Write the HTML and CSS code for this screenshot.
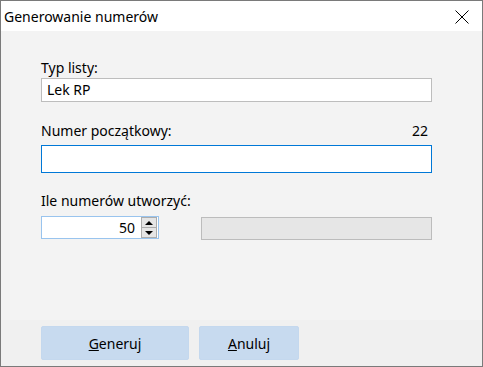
FILE: index.html
```html
<!DOCTYPE html>
<html lang="pl">
<head>
    <meta charset="UTF-8">
    <title>Generowanie numerów</title>
    <link rel="stylesheet" href="styles.css">
</head>
<body>
    <div class="window">
        <!-- Title bar -->
        <div class="titlebar">
            <span class="title">Generowanie numerów</span>
            <span class="close">
                <svg width="14" height="14" viewBox="0 0 14 14"><path d="M0.5 0.5 L13.5 13.5 M13.5 0.5 L0.5 13.5" stroke="#000" stroke-width="1" fill="none"/></svg>
            </span>
        </div>

        <!-- Form fields -->
        <div class="content">
            <div class="label label-first">Typ listy:</div>
            <div class="textbox">Lek RP</div>

            <div class="label label-row">
                <span>Numer początkowy:</span>
                <span>22</span>
            </div>
            <div class="textbox textbox-focus"></div>

            <div class="label label-third">Ile numerów utworzyć:</div>
            <div class="spin-row">
                <div class="spinner">
                    <span class="spin-value">50</span>
                    <span class="spin-buttons">
                        <span class="spin-btn"><span class="arrow-up"></span></span>
                        <span class="spin-btn"><span class="arrow-down"></span></span>
                    </span>
                </div>
                <div class="progress"></div>
            </div>
        </div>

        <!-- Buttons -->
        <div class="footer">
            <button class="btn btn-generate"><u>G</u>eneruj</button>
            <button class="btn btn-cancel"><u>A</u>nuluj</button>
        </div>
    </div>
</body>
</html>
```

FILE: styles.css
```css
body {
    margin: 0;
    font-family: "Noto Sans", "Open Sans", sans-serif;
    font-size: 14px;
    color: #000;
}

/* Dialog window */
.window {
    width: 483px;
    height: 367px;
    box-sizing: border-box;
    border: 1px solid #7a7a7a;
    display: flex;
    flex-direction: column;
    background-color: #f3f3f3;
}

.titlebar {
    height: 30px;
    background-color: #fff;
    display: flex;
    align-items: center;
    justify-content: space-between;
    padding-left: 3px;
    padding-right: 13px;
    font-size: 14px;
}

.close {
    display: flex;
    margin-top: 1px;
}

.content {
    flex: 1;
    padding: 0 50px 0 40px;
}

.label {
    line-height: 20px;
}

.label-first {
    margin-top: 27px;
}

.label-row {
    display: flex;
    justify-content: space-between;
    padding-right: 4px;
    margin-top: 19px;
    margin-bottom: 4px;
}

.label-third {
    margin-top: 18px;
    margin-bottom: 5px;
}

.textbox {
    height: 24px;
    box-sizing: border-box;
    border: 1px solid #bdbdbd;
    background-color: #fff;
    padding-left: 5px;
    line-height: 22px;
}

.textbox-focus {
    height: 28px;
    border-color: #0078d7;
}

.spin-row {
    display: flex;
    gap: 42px;
}

.spinner {
    width: 118px;
    height: 23px;
    box-sizing: border-box;
    border: 1px solid #99c4ee;
    background-color: #fff;
    display: flex;
    justify-content: flex-end;
}

.spin-value {
    line-height: 21px;
    padding-right: 6px;
}

.spin-buttons {
    width: 16px;
    display: flex;
    flex-direction: column;
    margin-right: 1px;
}

.spin-btn {
    flex: 1;
    background-color: #e5e5e5;
    border: 1px solid #acacac;
    display: flex;
    align-items: center;
    justify-content: center;
}

.spin-btn + .spin-btn {
    border-top: none;
}

.arrow-up {
    border-left: 4px solid transparent;
    border-right: 4px solid transparent;
    border-bottom: 4px solid #000;
}

.arrow-down {
    border-left: 4px solid transparent;
    border-right: 4px solid transparent;
    border-top: 4px solid #000;
}

.progress {
    flex: 1;
    height: 23px;
    margin-top: 1px;
    box-sizing: border-box;
    border: 1px solid #bcbcbc;
    background-color: #e6e6e6;
}

.footer {
    height: 46px;
    background-color: #f0f0f0;
    padding: 6px 0 0 40px;
    box-sizing: border-box;
    display: flex;
    gap: 10px;
    align-items: flex-start;
}

.btn {
    height: 34px;
    border: 1px solid #c4d8ee;
    border-radius: 2px;
    background-color: #c7daef;
    font-family: inherit;
    font-size: 14px;
    color: #000;
    padding: 0;
}

.btn-generate {
    width: 148px;
}

.btn-cancel {
    width: 100px;
}
```
